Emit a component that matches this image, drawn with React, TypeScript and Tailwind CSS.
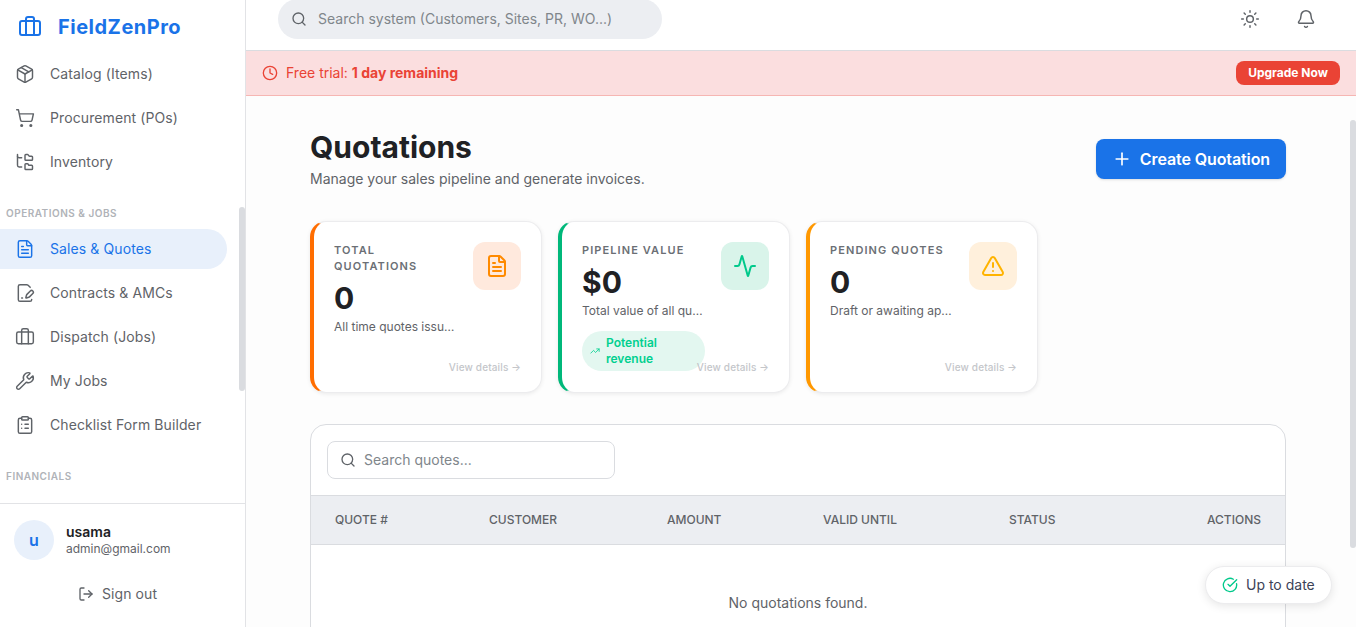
import {
  Activity,
  Bell,
  Briefcase,
  CircleCheckBig,
  ClipboardList,
  Clock,
  FileSignature,
  FileText,
  FolderTree,
  LogOut,
  Package,
  Plus,
  Search,
  ShoppingCart,
  Sun,
  TrendingUp,
  TriangleAlert,
  Wrench,
} from 'lucide-react';
import type { ReactNode } from 'react';

function NavItem({ icon, label, active = false }: { icon: ReactNode; label: string; active?: boolean }) {
  return (
    <div
      className={`flex items-center h-10 mb-1 w-[227px] pl-[15px] rounded-r-[20px] text-sm tracking-[0.1px] ${
        active ? 'bg-[#e8f0fb] text-[#1a73e8]' : 'text-[#5f6368]'
      }`}
    >
      <span className="w-[35px] shrink-0">{icon}</span>
      {label}
    </div>
  );
}

function SectionLabel({ children, className }: { children: string; className: string }) {
  return (
    <div className={`pl-1.5 text-[10px] font-semibold tracking-[0.5px] text-[#b0b3b8] leading-4 ${className}`}>
      {children}
    </div>
  );
}

function Sidebar() {
  return (
    <aside className="relative w-[246px] shrink-0 h-full flex flex-col border-r border-[#e2e3e6] bg-white">
      <div className="flex items-center h-[54px] pl-[18px] shrink-0">
        <Briefcase size={24} strokeWidth={2} className="text-[#1a73e8] mr-4" />
        <span className="text-xl font-bold text-[#1a73e8] tracking-[0.5px]">FieldZenPro</span>
      </div>
      <nav className="flex-1 overflow-hidden">
        <NavItem icon={<Package size={20} strokeWidth={1.75} />} label="Catalog (Items)" />
        <NavItem icon={<ShoppingCart size={20} strokeWidth={1.75} />} label="Procurement (POs)" />
        <NavItem icon={<FolderTree size={20} strokeWidth={1.75} />} label="Inventory" />
        <SectionLabel className="mt-[23px] mb-[8px]">OPERATIONS &amp; JOBS</SectionLabel>
        <NavItem active icon={<FileText size={20} strokeWidth={1.75} />} label="Sales & Quotes" />
        <NavItem icon={<FileSignature size={20} strokeWidth={1.75} />} label="Contracts & AMCs" />
        <NavItem icon={<Briefcase size={20} strokeWidth={1.75} />} label="Dispatch (Jobs)" />
        <NavItem icon={<Wrench size={20} strokeWidth={1.75} />} label="My Jobs" />
        <NavItem icon={<ClipboardList size={20} strokeWidth={1.75} />} label="Checklist Form Builder" />
        <SectionLabel className="mt-[23px]">FINANCIALS</SectionLabel>
      </nav>
      <div className="h-[124px] shrink-0 border-t border-[#e2e3e6] px-3.5 pt-4">
        <div className="flex items-center gap-3">
          <div className="w-10 h-10 rounded-full bg-[#e8f0fb] flex items-center justify-center text-base font-semibold text-[#1a73e8]">
            u
          </div>
          <div>
            <div className="text-sm leading-[18px] font-semibold text-[#202124]">usama</div>
            <div className="text-xs leading-4 text-[#5f6368]">admin@gmail.com</div>
          </div>
        </div>
        <div className="flex items-center justify-center gap-2 mt-[24px] pr-[10px] text-sm tracking-[0.1px] text-[#5f6368]">
          <LogOut size={16} />
          Sign out
        </div>
      </div>
      <div className="absolute left-[239px] top-[207px] w-1.5 h-[184px] rounded-full bg-[#dadce0]" />
    </aside>
  );
}

function StatCard({
  title,
  value,
  desc,
  border,
  tint,
  icon,
  children,
}: {
  title: string;
  value: string;
  desc: string;
  border: string;
  tint: string;
  icon: ReactNode;
  children?: ReactNode;
}) {
  return (
    <div className={`relative h-[172px] rounded-2xl border border-[#ececee] border-l-4 bg-white shadow-[0_1px_4px_rgba(0,0,0,0.08)] pl-5 pr-5 pt-5 ${border}`}>
      <div className="flex justify-between items-start">
        <div className="w-[125px] min-w-0">
          <div className="text-[11px] font-semibold tracking-[1.1px] leading-4 text-[#6b6f75]">{title}</div>
          <div className="text-3xl font-bold leading-9 mt-1.5 text-[#202124]">{value}</div>
          <div className="text-xs leading-4 mt-[3px] text-[#5f6368] whitespace-nowrap">{desc}</div>
        </div>
        <div className={`w-12 h-12 rounded-xl flex items-center justify-center shrink-0 ${tint}`}>{icon}</div>
      </div>
      {children}
      <div className="absolute right-5 bottom-[17px] text-[10px] leading-4 font-medium tracking-[0.15px] text-[#c4c6ca]">View details →</div>
    </div>
  );
}

function QuotesTable() {
  return (
    <div className="mt-[31px] rounded-2xl border border-[#dadce0] bg-white overflow-hidden h-[300px]">
      <div className="p-4 h-[70px]">
        <div className="flex items-center gap-2 w-[288px] h-[38px] px-3 rounded-lg border border-[#dadce0] text-sm text-[#80868b]">
          <Search size={16} className="text-[#5f6368]" />
          <span>Search quotes...</span>
        </div>
      </div>
      <div className="grid grid-cols-[154px_178px_156px_186px_1fr_auto] items-center h-[50px] px-6 bg-[#eceef2] border-y border-[#dadce0] text-xs font-medium text-[#5f6368]">
        <span>QUOTE #</span>
        <span>CUSTOMER</span>
        <span>AMOUNT</span>
        <span>VALID UNTIL</span>
        <span>STATUS</span>
        <span>ACTIONS</span>
      </div>
      <div className="text-center text-sm leading-5 pt-[48px] text-[#5f6368]">No quotations found.</div>
    </div>
  );
}

export default function App() {
  return (
    <div className="relative flex w-[1356px] h-[627px] overflow-hidden bg-white font-['Inter',sans-serif]">
      <Sidebar />
      <div className="flex-1 min-w-0 flex flex-col">
        <header className="h-[51px] shrink-0 flex items-start justify-between border-b border-[#dadce0] pl-8 pr-10 bg-white">
          <div className="flex items-center gap-[11px] w-[384px] h-10 -mt-px px-[13px] rounded-full bg-[#eceef2] text-sm text-[#80868b]">
            <Search size={16} className="text-[#5f6368]" />
            <span>Search system (Customers, Sites, PR, WO...)</span>
          </div>
          <div className="flex items-center gap-9 h-[38px] text-[#5f6368]">
            <Sun size={20} strokeWidth={1.75} />
            <Bell size={20} strokeWidth={1.75} />
          </div>
        </header>
        <div className="h-[45px] shrink-0 flex items-center justify-between pl-4 pr-4 bg-[#fbdedf] border-b border-[#f6b6b3] text-sm text-[#ea4335]">
          <div className="flex items-center gap-2">
            <Clock size={16} />
            <span>
              Free trial: <span className="font-bold">1 day remaining</span>
            </span>
          </div>
          <div className="flex items-center justify-center h-6 w-[104px] rounded-lg bg-[#ea4335] text-xs font-bold text-white">Upgrade Now</div>
        </div>
        <main className="relative flex-1 min-h-0 overflow-hidden bg-[#fdfdfd] pl-16 pr-[70px] pt-[32px]">
          <div className="flex justify-between items-start">
            <div>
              <h1 className="text-3xl leading-[38px] font-bold text-[#202124]">Quotations</h1>
              <p className="text-sm leading-5 mt-[3px] text-[#5f6368]">Manage your sales pipeline and generate invoices.</p>
            </div>
            <div className="flex items-center gap-2 h-10 mt-[11px] px-4 rounded-lg bg-[#1a73e8] text-white text-base font-semibold tracking-[-0.1px] shadow-sm">
              <Plus size={20} />
              Create Quotation
            </div>
          </div>
          <div className="grid grid-cols-[232px_232px_232px] gap-4 mt-[32px]">
            <StatCard
              title="TOTAL QUOTATIONS"
              value="0"
              desc="All time quotes issu…"
              border="border-l-[#ff6d00]"
              tint="bg-[#ffe9dd]"
              icon={<FileText size={24} strokeWidth={2} className="text-[#ff8a00]" />}
            />
            <StatCard
              title="PIPELINE VALUE"
              value="$0"
              desc="Total value of all qu…"
              border="border-l-[#00b87a]"
              tint="bg-[#d9f4ea]"
              icon={<Activity size={24} strokeWidth={2} className="text-[#00c98b]" />}
            >
              <div className="flex items-center gap-1.5 w-[123px] h-10 mt-3 pl-2 rounded-[20px] bg-[#e3f7f0] text-xs font-semibold leading-4 text-[#00d08f]">
                <TrendingUp size={10} className="shrink-0" />
                <span>
                  Potential
                  <br />
                  revenue
                </span>
              </div>
            </StatCard>
            <StatCard
              title="PENDING QUOTES"
              value="0"
              desc="Draft or awaiting ap…"
              border="border-l-[#ff9800]"
              tint="bg-[#fff0dc]"
              icon={<TriangleAlert size={24} strokeWidth={2} className="text-[#ffb300]" />}
            />
          </div>
          <QuotesTable />
          <div className="absolute right-0 top-[24px] w-1.5 h-[428px] rounded-full bg-[#dadce0]" />
        </main>
      </div>
      <div className="absolute left-[1205px] top-[566px] flex items-center gap-2 w-[127px] h-[38px] pl-4 rounded-full bg-white border border-[#ececee] shadow-[0_2px_10px_rgba(0,0,0,0.1)] text-sm text-[#3c4257]">
        <CircleCheckBig size={16} className="text-[#00c98b]" />
        Up to date
      </div>
    </div>
  );
}
